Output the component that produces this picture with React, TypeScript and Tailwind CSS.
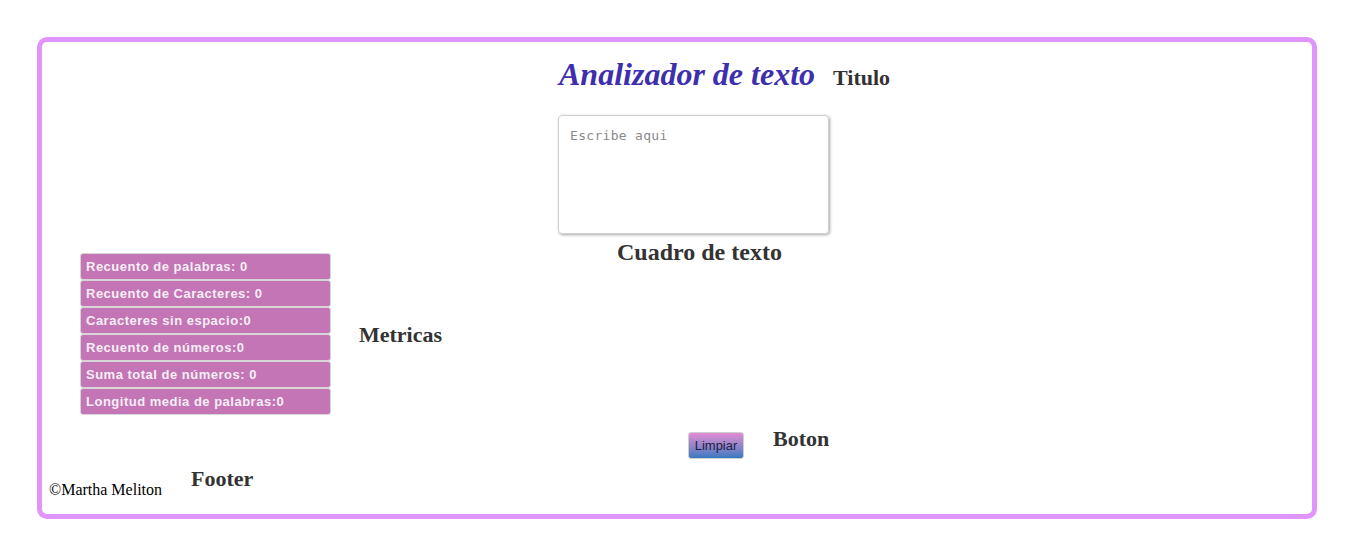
import React from "react";

const metricas = [
  "Recuento de palabras: 0",
  "Recuento de Caracteres: 0",
  "Caracteres sin espacio:0",
  "Recuento de números:0",
  "Suma total de números: 0",
  "Longitud media de palabras:0",
];

const serif = "font-['Liberation_Serif',_'Times_New_Roman',_serif]";

function Etiqueta({ children, className = "" }: { children: React.ReactNode; className?: string }) {
  return (
    <span className={`${serif} font-bold text-[22px] text-[#333333] leading-[25px] ${className}`}>
      {children}
    </span>
  );
}

export default function App() {
  return (
    <div className="bg-white w-[1355px] h-[557px] pt-[37px] pl-[37px]">
      <div className="w-[1280px] h-[482px] border-[5px] border-[#df95fb] rounded-[10px] flex flex-col">
        {/* titulo */}
        <div className="flex items-baseline pl-[517px] mt-[14px]">
          <h1 className={`${serif} italic font-bold text-[32px] leading-[37px] text-[#3d2fae]`}>
            Analizador de texto
          </h1>
          <Etiqueta className="ml-[18px]">Titulo</Etiqueta>
        </div>

        {/* cuadro de texto */}
        <div className="pl-[516px] mt-[22px]">
          <textarea
            placeholder="Escribe aqui"
            className="w-[271px] h-[119px] resize-none border border-[#cfcfcf] rounded-[4px] shadow-[1px_1px_3px_rgba(0,0,0,0.35)] px-[11px] pt-[12px] text-[13px] leading-[16px] font-['DejaVu_Sans_Mono',_monospace] placeholder:text-[#8a8a8a] tracking-[0.3px] outline-none"
          />
        </div>

        {/* metricas + etiqueta cuadro */}
        <div className="flex items-start">
          <div className="w-[575px] flex items-center pl-[38px] mt-[13px]">
            <ul className="w-[251px] flex flex-col">
              {metricas.map((m) => (
                <li
                  key={m}
                  className="h-[27px] bg-[#c375b5] border border-[#d6d6d6] rounded-[3px] pl-[5px] flex items-center text-[13px] font-bold tracking-[0.5px] text-[#f6eef6] font-['Liberation_Sans',_Arial,_sans-serif]"
                >
                  {m}
                </li>
              ))}
            </ul>
            <Etiqueta className="ml-[28px]">Metricas</Etiqueta>
          </div>
          <Etiqueta className="text-[24px] leading-[27px] -mt-[1px]">Cuadro de texto</Etiqueta>
        </div>

        {/* boton */}
        <div className="flex items-center pl-[646px] mt-[17px]">
          <button className="w-[56px] h-[27px] rounded-[3px] border border-[#cfcfcf] bg-gradient-to-b from-[#e08bd3] to-[#3279c0] text-[13px] text-[#1e1d45] font-['Liberation_Sans',_Arial,_sans-serif]">
            Limpiar
          </button>
          <Etiqueta className="ml-[29px] -mt-[15px]">Boton</Etiqueta>
        </div>

        {/* footer */}
        <footer className="flex items-baseline pl-[7px] mt-[5px]">
          <span className={`${serif} text-[16px] text-black mt-[14px]`}>©Martha Meliton</span>
          <Etiqueta className="ml-[29px] relative -top-[9px]">Footer</Etiqueta>
        </footer>
      </div>
    </div>
  );
}
